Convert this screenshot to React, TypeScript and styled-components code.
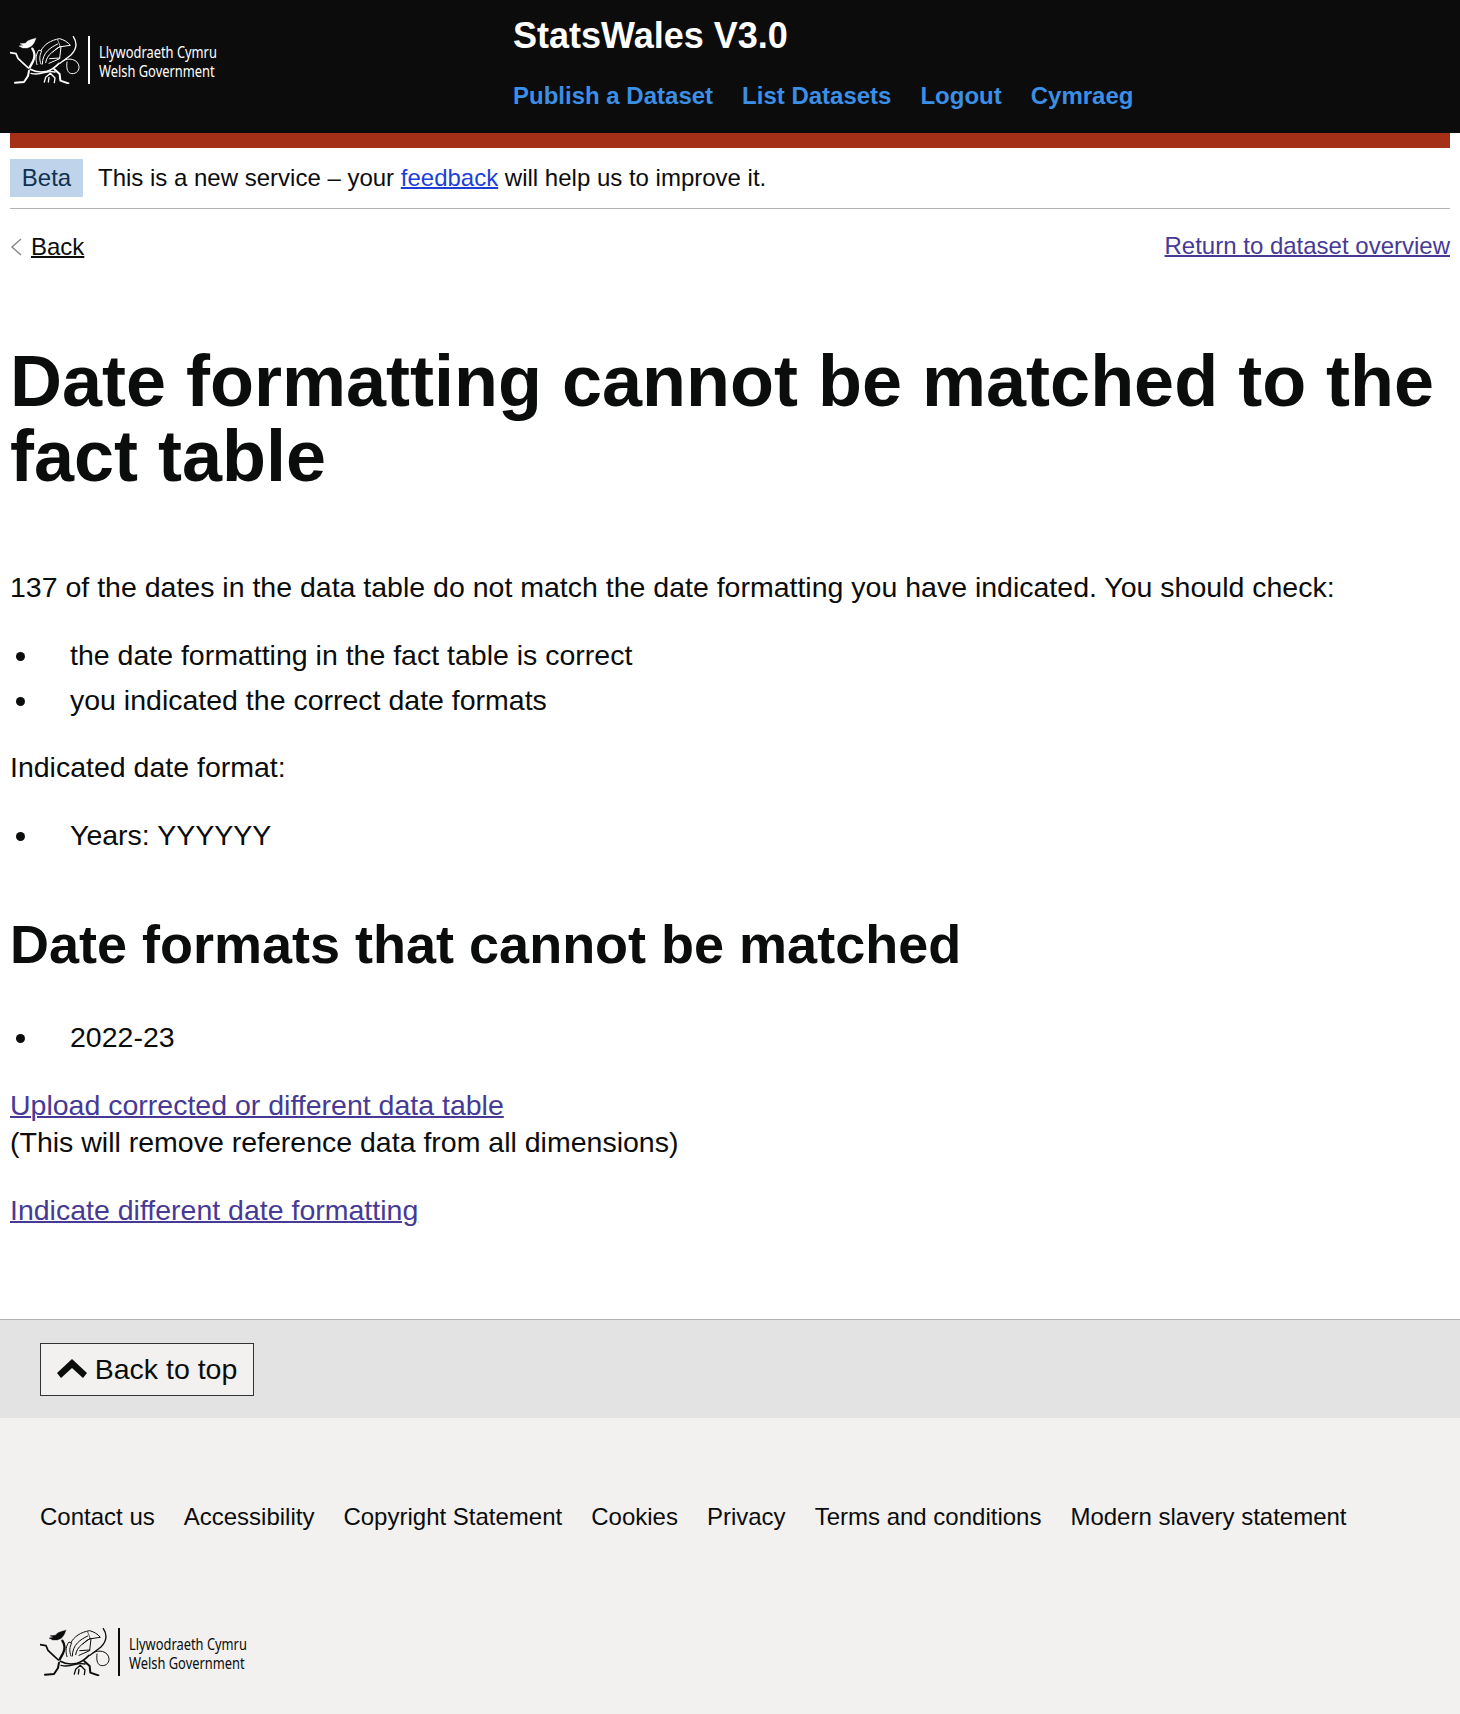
import React from "react";
import styled, { createGlobalStyle } from "styled-components";

const GlobalStyle = createGlobalStyle`
  html, body {
    margin: 0;
    padding: 0;
    background: #fff;
    color: #0b0c0c;
    font-family: "Liberation Sans", Arial, sans-serif;
  }
`;

const Page = styled.div`
  width: 1460px;
  min-height: 1714px;
  display: flex;
  flex-direction: column;
`;
const Header = styled.header`
  height: 133px;
  background: #0c0c0c;
  display: flex;
`;
const HeaderLogo = styled.div`
  width: 513px;
  padding: 36px 0 0 10px;
  box-sizing: border-box;
`;
const HeaderMain = styled.div`
  display: flex;
  flex-direction: column;
`;
const SiteName = styled.div`
  font-size: 36px;
  font-weight: 700;
  line-height: 42px;
  margin-top: 15px;
  color: #fff;
`;
const Nav = styled.nav`
  display: flex;
  gap: 29px;
  margin-top: 21px;
`;
const NavLink = styled.a`
  font-size: 24px;
  font-weight: 700;
  line-height: 36px;
  color: #3b8fe6;
`;
const Main = styled.main`
  flex: 1;
  padding: 0 10px;
`;
const RedBar = styled.div`
  height: 15px;
  background: #a33017;
`;
const PhaseBanner = styled.div`
  display: flex;
  align-items: center;
  height: 60px;
  border-bottom: 1px solid #b1b4b6;
`;
const Tag = styled.span`
  width: 73px;
  height: 38px;
  display: flex;
  align-items: center;
  justify-content: center;
  background: #bfd4ea;
  color: #12304f;
  font-size: 24px;
  margin-right: 15px;
`;
const PhaseText = styled.span`
  font-size: 24px;
`;
const FeedbackLink = styled.a`
  color: #1d3fd8;
  text-decoration: underline;
  text-decoration-thickness: 2px;
`;
const TopLinks = styled.div`
  display: flex;
  justify-content: space-between;
  align-items: center;
  margin-top: 20px;
  height: 36px;
`;
const BackLink = styled.a`
  display: flex;
  align-items: center;
  gap: 9px;
  font-size: 24px;
  color: #0b0c0c;
  span {
    text-decoration: underline;
    text-decoration-thickness: 2px;
  }
`;
const TextLink = styled.a`
  color: #463a96;
  text-decoration: underline;
  text-decoration-thickness: 2px;
  font-size: 28.5px;
  line-height: 37px;
`;
const SmallLink = styled(TextLink)`
  display: block;
  font-size: 24px;
  line-height: 34px;
  margin-bottom: 2px;
`;
const Title = styled.h1`
  font-size: 72px;
  line-height: 75px;
  font-weight: 700;
  margin: 79px 0 75px;
`;
const Subtitle = styled.h2`
  font-size: 54px;
  line-height: 60px;
  font-weight: 700;
  margin: 61px 0 45px;
`;
const Para = styled.p`
  font-size: 28.5px;
  line-height: 36px;
  margin: 0 0 32px;
`;
const BulletList = styled.ul`
  list-style: none;
  margin: 0 0 31px;
  padding: 0;
`;
const ValueList = styled(BulletList)`
  margin-bottom: 32px;
`;
const Bullet = styled.li`
  display: flex;
  font-size: 28.5px;
  line-height: 36px;
  margin-bottom: 9px;
  &:last-child {
    margin-bottom: 0;
  }
  &::before {
    content: "";
    flex: 0 0 9px;
    height: 9px;
    margin: 15px 45px 0 6px;
    border-radius: 50%;
    background: #0b0c0c;
  }
`;
const LinkBlock = styled.div`
  font-size: 28.5px;
  line-height: 37px;
  margin-bottom: 31px;
`;
const TopBand = styled.div`
  height: 98px;
  margin-top: 58px;
  background: #e3e3e3;
  border-top: 1px solid #b1b4b6;
  display: flex;
  align-items: center;
  padding-left: 40px;
`;
const TopButton = styled.a`
  width: 214px;
  height: 53px;
  box-sizing: border-box;
  border: 1px solid #333;
  background: #f2f1f0;
  display: flex;
  align-items: center;
  justify-content: center;
  gap: 8px;
  font-size: 28.5px;
  color: #0b0c0c;
`;
const Footer = styled.footer`
  height: 296px;
  background: #f2f1f0;
  padding: 81px 40px 0;
  box-sizing: border-box;
`;
const FooterLinks = styled.div`
  display: flex;
  gap: 29px;
  height: 36px;
  align-items: center;
`;
const FooterLink = styled.a`
  font-size: 24px;
  color: #0b0c0c;
`;
const FooterLogo = styled.div`
  margin-top: 93px;
`;
const LogoWrap = styled.div<{ $color: string }>`
  display: flex;
  align-items: center;
  gap: 8px;
  color: ${(p) => p.$color};
`;
const LogoRule = styled.div`
  width: 2px;
  height: 48px;
  background: currentColor;
`;
const LogoText = styled.div`
  font-family: "Noto Sans", sans-serif;
  font-size: 15.5px;
  line-height: 19px;
  margin: 4px 0 0 1px;
  transform: scaleX(0.83);
  transform-origin: left center;
  white-space: nowrap;
`;

const Logo = ({ color }: { color: string }) => (
  <LogoWrap $color={color}>
    <svg width="70" height="48" viewBox="30 48 210 144" fill="none" stroke="currentColor" strokeWidth="3" strokeLinecap="round" strokeLinejoin="round">
      <g transform="translate(15 30)">
        <path d="M93 25l-6 14-8 10-12 5-14 0-11-6 13-2-10-5 16-1 8-8 12-4z" fill="currentColor" strokeWidth="1" />
        <path d="M82 56c8 12 8 26 2 38l-10 18" strokeWidth="7" />
        <path d="M15 68l18 3 6 14 16 15 15 14" strokeWidth="5" />
        <path d="M72 122l-3 16-12 18-27 2" strokeWidth="6" />
        <path d="M76 118c18 10 32 10 50 6 14-4 24-12 36-24" strokeWidth="5" />
        <path d="M78 130c14 4 26 2 40-2 12-3 22-4 32-2" strokeWidth="4" />
        <path d="M148 118l16 14 2 20 24 8" strokeWidth="6" />
        <path d="M118 156l4-14 14-12 14 14-2 14M132 142l-2 14" strokeWidth="4" />
        <path d="M96 104c-6-18-2-34 6-44l8 4c-6 10-8 24-2 38" />
        <path d="M108 62c8-18 30-32 56-36 14 4 24 10 32 20l-28 4c-10 2-18 8-24 16" />
        <path d="M112 102c0-16 6-30 16-40 8-8 18-14 30-20" />
        <path d="M122 98c2-12 8-22 18-30l24-18" />
        <path d="M132 100l32-14 4-36M134 86l30-2" />
        <path d="M158 30l8 20" strokeWidth="2" />
        <path d="M205 20c12 18 10 38-8 56l-32 24" strokeWidth="4" />
        <path d="M172 94c18-14 48-6 50 16 1 16-14 24-26 20-10-4-12-18-10-34" />
      </g>
    </svg>
    <LogoRule />
    <LogoText>
      Llywodraeth Cymru
      <br />
      Welsh Government
    </LogoText>
  </LogoWrap>
);

const App = () => {
  return (
    <Page>
      <GlobalStyle />
      <Header>
        <HeaderLogo>
          <Logo color="#fff" />
        </HeaderLogo>
        <HeaderMain>
          <SiteName>StatsWales V3.0</SiteName>
          <Nav>
            <NavLink>Publish a Dataset</NavLink>
            <NavLink>List Datasets</NavLink>
            <NavLink>Logout</NavLink>
            <NavLink>Cymraeg</NavLink>
          </Nav>
        </HeaderMain>
      </Header>
      <Main>
        <RedBar />
        <PhaseBanner>
          <Tag>Beta</Tag>
          <PhaseText>
            This is a new service – your <FeedbackLink>feedback</FeedbackLink> will help us to improve it.
          </PhaseText>
        </PhaseBanner>
        <TopLinks>
          <BackLink>
            <svg width="12" height="18" viewBox="0 0 12 18" fill="none" stroke="#8a8a8a" strokeWidth="1.5">
              <path d="M11 1L2 9l9 8" />
            </svg>
            <span>Back</span>
          </BackLink>
          <SmallLink>Return to dataset overview</SmallLink>
        </TopLinks>
        <Title>Date formatting cannot be matched to the fact table</Title>
        <Para>137 of the dates in the data table do not match the date formatting you have indicated. You should check:</Para>
        <BulletList>
          <Bullet>the date formatting in the fact table is correct</Bullet>
          <Bullet>you indicated the correct date formats</Bullet>
        </BulletList>
        <Para>Indicated date format:</Para>
        <BulletList>
          <Bullet>Years: YYYYYY</Bullet>
        </BulletList>
        <Subtitle>Date formats that cannot be matched</Subtitle>
        <ValueList>
          <Bullet>2022-23</Bullet>
        </ValueList>
        <LinkBlock>
          <TextLink>Upload corrected or different data table</TextLink>
          <br />
          (This will remove reference data from all dimensions)
        </LinkBlock>
        <LinkBlock>
          <TextLink>Indicate different date formatting</TextLink>
        </LinkBlock>
      </Main>
      <TopBand>
        <TopButton>
          <svg width="30" height="20" viewBox="0 0 30 20" fill="#0b0c0c">
            <path d="M15 0l15 14-4 5L15 9 4 19l-4-5z" />
          </svg>
          Back to top
        </TopButton>
      </TopBand>
      <Footer>
        <FooterLinks>
          <FooterLink>Contact us</FooterLink>
          <FooterLink>Accessibility</FooterLink>
          <FooterLink>Copyright Statement</FooterLink>
          <FooterLink>Cookies</FooterLink>
          <FooterLink>Privacy</FooterLink>
          <FooterLink>Terms and conditions</FooterLink>
          <FooterLink>Modern slavery statement</FooterLink>
        </FooterLinks>
        <FooterLogo>
          <Logo color="#0b0c0c" />
        </FooterLogo>
      </Footer>
    </Page>
  );
};

export default App;
